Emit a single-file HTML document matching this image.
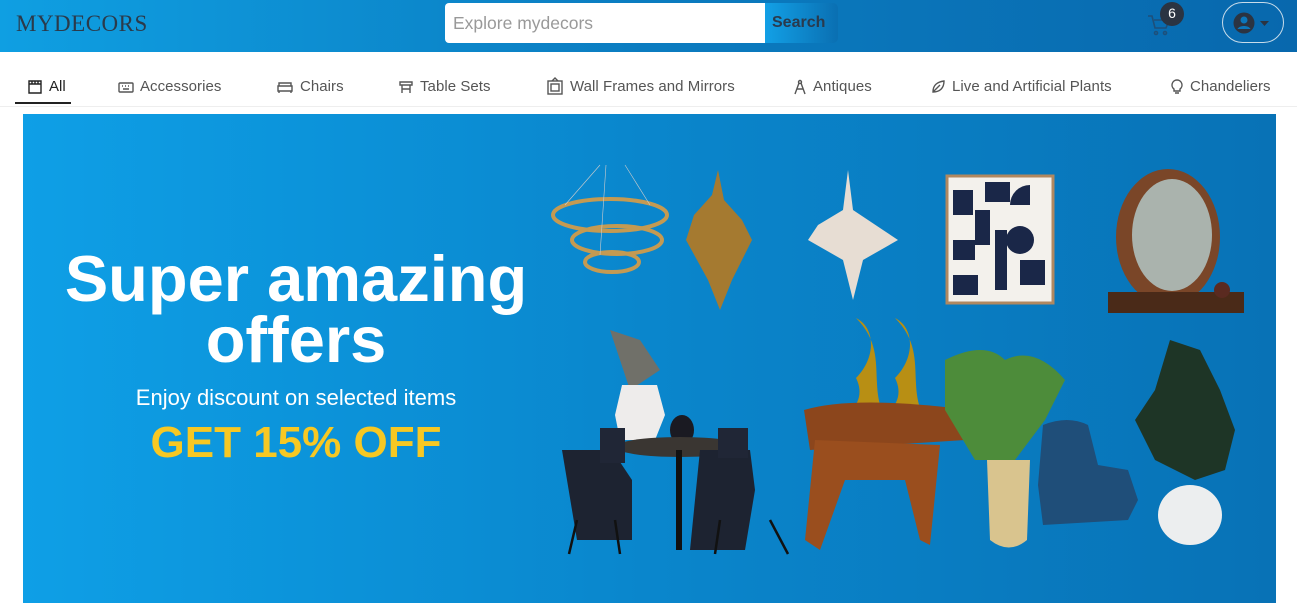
<!DOCTYPE html>
<html><head><meta charset="utf-8"><style>
*{margin:0;padding:0;box-sizing:border-box}
body{width:1297px;height:615px;background:#fff;font-family:"Liberation Sans",sans-serif;position:relative;overflow:hidden}
.hdr{position:absolute;left:0;top:0;width:1297px;height:52px;background:linear-gradient(90deg,#0f9fe2,#0b7cc0 50%,#0868ad)}
.logo{position:absolute;left:16px;top:11px;font-family:"Liberation Serif",serif;font-size:23px;color:#2b3a4a;letter-spacing:0.5px}
.search{position:absolute;left:445px;top:3px;width:320px;height:40px;background:#fff;border-radius:4px 0 0 4px;color:#999;font-size:17.5px;padding:10px 8px}
.sbtn{position:absolute;left:765px;top:3px;width:73px;height:40px;background:linear-gradient(90deg,#12a0e6,#0a6fb2);border-radius:0 5px 5px 0;color:#2a3a4d;font-weight:bold;font-size:16px;padding:11px 7px}
.badge{position:absolute;left:1160px;top:2px;width:24px;height:24px;border-radius:50%;background:#2b3442;color:#fff;font-size:14px;text-align:center;line-height:23px}
.user{position:absolute;left:1222px;top:2px;width:62px;height:41px;border:1px solid #c8dcea;border-radius:21px}
.nav{position:absolute;top:78px;font-size:15px;letter-spacing:0.05px;color:#555;display:flex;align-items:center;gap:6px}
.nav svg{stroke:#555;fill:none;stroke-width:1.4}
.line{position:absolute;left:0;top:106px;width:1297px;height:1px;background:#eee}
.banner{position:absolute;left:23px;top:114px;width:1253px;height:489px;background:linear-gradient(90deg,#0e9fe6,#0a86cc 50%,#0872b6)}
.t1{position:absolute;left:0;width:546px;text-align:center;color:#fff;font-weight:bold}
</style></head><body>
<div class="hdr">
<div class="logo">MYDECORS</div>
<div class="search">Explore mydecors</div>
<div class="sbtn">Search</div>
<svg style="position:absolute;left:1146px;top:13px" width="26" height="24" viewBox="0 0 26 24" fill="none" stroke="#1d4f7a" stroke-width="1.6"><path d="M2 3h4l3 12h11l3-8H8"/><circle cx="10" cy="20" r="1.5"/><circle cx="19" cy="20" r="1.5"/></svg>
<div class="badge">6</div>
<div class="user"><svg style="position:absolute;left:10px;top:9px" width="40" height="22" viewBox="0 0 40 22"><circle cx="11" cy="11" r="10.5" fill="#2b3442"/><circle cx="11" cy="8" r="3.5" fill="#0b77bb"/><path d="M4.5 17c2-4 11-4 13 0" fill="#0b77bb"/><path d="M27 9h9l-4.5 5z" fill="#2b3442"/></svg></div>
</div>
<div class="nav" style="left:27px"><svg width="16" height="16" viewBox="0 0 16 16" style="stroke:#222"><path d="M2 2h12v3H2zM2 5v9h12V5M5 2v3M8 2v3M11 2v3"/></svg><span style="color:#222">All</span></div>
<div style="position:absolute;left:15px;top:102px;width:56px;height:2px;background:#222"></div>
<div class="nav" style="left:118px"><svg width="16" height="16" viewBox="0 0 16 16"><rect x="1" y="4" width="14" height="9" rx="1"/><path d="M4 7h1M7 7h1M10 7h1M5 10h6"/></svg>Accessories</div>
<div class="nav" style="left:276px"><svg width="18" height="16" viewBox="0 0 18 16"><path d="M3 7V4h12v3M2 7h14v5H2zM3 12v2M15 12v2"/></svg>Chairs</div>
<div class="nav" style="left:398px"><svg width="16" height="16" viewBox="0 0 16 16"><path d="M2 3h12v3H2zM4 6v8M12 6v8M4 10h8"/></svg>Table Sets</div>
<div class="nav" style="left:546px;top:77px"><svg width="18" height="18" viewBox="0 0 18 18"><rect x="2" y="4" width="14" height="13"/><rect x="5" y="7" width="8" height="7"/><path d="M6 4l3-3 3 3"/></svg>Wall Frames and Mirrors</div>
<div class="nav" style="left:793px"><svg width="14" height="16" viewBox="0 0 14 16"><circle cx="7" cy="3" r="1.5"/><path d="M6 4L2 15M8 4l4 11M4 10h6"/></svg>Antiques</div>
<div class="nav" style="left:930px"><svg width="16" height="16" viewBox="0 0 16 16"><path d="M3 13C3 6 7 3 14 2c0 7-4 11-11 11zM3 13l7-7"/></svg>Live and Artificial Plants</div>
<div class="nav" style="left:1170px"><svg width="14" height="16" viewBox="0 0 14 16"><path d="M7 1a5 5 0 0 0-3 9v2h6v-2a5 5 0 0 0-3-9zM5 14h4"/></svg>Chandeliers</div>
<div class="line"></div>
<div class="banner">
<div class="t1" style="top:134px;font-size:65px;line-height:62px">Super amazing</div>
<div class="t1" style="top:195px;font-size:65px;line-height:62px">offers</div>
<div class="t1" style="top:271px;font-size:22px;font-weight:normal">Enjoy discount on selected items</div>
<div class="t1" style="top:304px;font-size:44px;color:#f7c823">GET 15% OFF</div>
</div>
<svg style="position:absolute;left:0;top:0" width="1297" height="615">
<g fill="none" stroke="#c49a52" stroke-width="4"><ellipse cx="610" cy="215" rx="57" ry="16"/><ellipse cx="617" cy="240" rx="45" ry="14"/><ellipse cx="612" cy="262" rx="27" ry="10"/></g>
<g stroke="#ccc" stroke-width="0.6"><path d="M600 165L565 205M606 165L600 255M625 165L650 205"/></g>
<path d="M718 170l6 30 18 20 10 20-20 40-12 30-12-30-22-40 8-25 18-20z" fill="#a57a30"/>
<path d="M848 170l5 40 30 20 15 10-35 20-10 40-10-40-35-20 10-15 25-15z" fill="#e7ddd3"/>
<rect x="947" y="176" width="106" height="127" fill="#f3f1ec" stroke="#b08860" stroke-width="3"/>
<g fill="#1a2748"><rect x="953" y="190" width="20" height="25"/><rect x="985" y="182" width="25" height="20"/><circle cx="1020" cy="240" r="14"/><rect x="953" y="240" width="22" height="20"/><rect x="995" y="230" width="12" height="60"/><rect x="953" y="275" width="25" height="20"/><rect x="1020" y="260" width="25" height="25"/><path d="M1030 185a20 20 0 0 0-20 20h20z"/><rect x="975" y="210" width="15" height="35"/></g>
<ellipse cx="1168" cy="237" rx="52" ry="68" fill="#7a4628"/><ellipse cx="1172" cy="235" rx="40" ry="56" fill="#aab3ad"/>
<rect x="1108" y="292" width="136" height="21" fill="#4a2a18"/><circle cx="1222" cy="290" r="8" fill="#5a2a20"/>
<path d="M610 330l30 10 20 30-30 20z" fill="#8a6a50" opacity=".8"/>
<path d="M622 385h35l8 30-10 25h-35l-5-25z" fill="#eeeceb"/><ellipse cx="682" cy="430" rx="12" ry="15" fill="#1a1a22"/>
<ellipse cx="680" cy="447" rx="65" ry="10" fill="#3a3632"/><rect x="676" y="450" width="6" height="100" fill="#111"/>
<path d="M562 450h50l20 30v60h-55z" fill="#1d2331"/><path d="M700 450h50l5 40-10 60h-55z" fill="#1d2331"/>
<path d="M600 428h25v35h-25zM718 428h30v30h-30z" fill="#202636"/>
<g stroke="#111" stroke-width="2.5"><path d="M577 520l-8 34M615 520l5 34M720 520l-5 34M770 520l18 34"/></g>
<path d="M856 318c20 10 20 40 0 60 10 20-5 30 0 30h25c-10-30 5-60-25-90zM895 318c20 10 20 40 0 60 10 20-5 30 0 30h25c-10-30 5-60-25-90z" fill="#b88f14"/>
<path d="M804 410q50-15 166 0l-5 30-155 10z" fill="#8c461c"/>
<path d="M815 440l-10 100 15 10 25-70h60l15 60 10 5 10-100z" fill="#9a4e1e"/>
<path d="M945 360q40-20 60 0q30-15 60 20l-20 40-30 40h-40l-30-50z" fill="#4d8c3a"/>
<path d="M987 460h43l-3 80q-18 15-37 0z" fill="#d9c48e"/>
<path d="M1043 425q25-10 45 0l10 40 30 5 10 30-10 20-85 5-5-40z" fill="#1f4e79"/>
<path d="M1170 340l30 10 20 40 15 40-10 40-30 10-40-20-20-40 20-30z" fill="#1e3526"/>
<ellipse cx="1190" cy="515" rx="32" ry="30" fill="#eceeef"/>
</svg>
</body></html>
